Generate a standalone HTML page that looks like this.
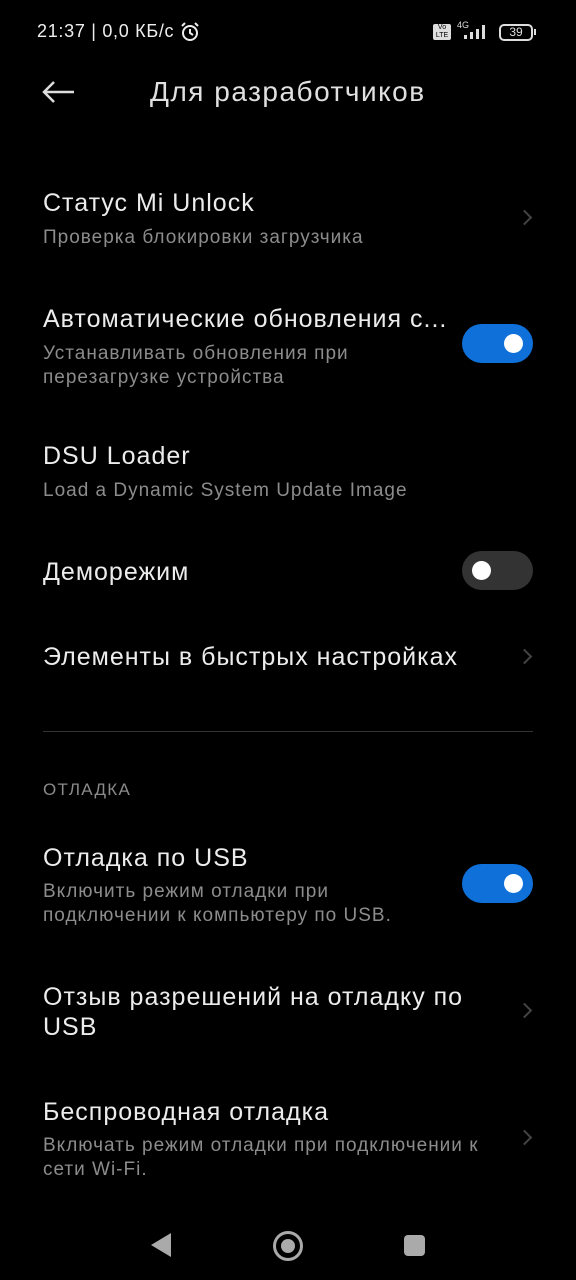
<!DOCTYPE html>
<html><head><meta charset="utf-8"><style>
body{margin:0;width:576px;height:1280px;background:#000;position:relative;overflow:hidden;font-family:"Liberation Sans",sans-serif}
.a{position:absolute;white-space:nowrap}
.t{font-size:25px;letter-spacing:1px;color:#ececec;left:43px}
.s{font-size:19px;letter-spacing:1px;color:#8c8c8c;left:43px;line-height:24px}
.sw{position:absolute;left:462px;width:71px;height:39px;border-radius:20px}
.on{background:#0f70d9}.off{background:#333}
.k{position:absolute;top:10px;width:19px;height:19px;border-radius:50%;background:#fff}
.ch{position:absolute;left:519px;width:9px;height:9px;border-top:2px solid #444;border-right:2px solid #444;transform:rotate(45deg)}
</style></head><body>
<div class="a" style="left:37px;top:21px;font-size:18px;letter-spacing:0.7px;color:#eee">21:37 | 0,0 КБ/с</div>
<svg class="a" style="left:179px;top:21px" width="22" height="22" viewBox="0 0 22 22"><circle cx="11" cy="12" r="7" fill="none" stroke="#eee" stroke-width="2"/><path d="M11 8v4l3 2M3 5l3-3M19 5l-3-3" stroke="#eee" stroke-width="2" fill="none"/></svg>
<div class="a" style="left:433px;top:24px;width:18px;height:16px;background:#ddd;border-radius:2px;font-size:7px;color:#000;text-align:center;line-height:8px">Vo<br>LTE</div>
<div class="a" style="left:457px;top:20px;font-size:9px;color:#ddd">4G</div>
<svg class="a" style="left:458px;top:24px" width="34" height="16"><rect x="6" y="11" width="3" height="4" fill="#ddd"/><rect x="12" y="8" width="3" height="7" fill="#ddd"/><rect x="18" y="5" width="3" height="10" fill="#ddd"/><rect x="24" y="1" width="3" height="14" fill="#ddd"/></svg>
<div class="a" style="left:499px;top:24px;width:30px;height:13px;border:2px solid #ddd;border-radius:5px;font-size:12px;color:#ddd;text-align:center;line-height:13px">39</div>
<div class="a" style="left:534px;top:29px;width:2px;height:6px;background:#ddd"></div>
<svg class="a" style="left:40px;top:80px" width="36" height="24"><path d="M34 12H4M14 2L4 12l10 10" stroke="#ddd" stroke-width="2.5" fill="none"/></svg>
<div class="a" style="left:150px;top:76px;font-size:28px;letter-spacing:1.5px;color:#e0e0e0">Для разработчиков</div>

<div class="a t" style="top:189px">Статус Mi Unlock</div>
<div class="a s" style="top:226px">Проверка блокировки загрузчика</div>
<div class="ch" style="top:212px"></div>

<div class="a t" style="top:305px">Автоматические обновления с...</div>
<div class="a s" style="top:342px">Устанавливать обновления при<br>перезагрузке устройства</div>
<div class="sw on" style="top:324px"><div class="k" style="left:42px"></div></div>

<div class="a t" style="top:442px">DSU Loader</div>
<div class="a s" style="top:479px">Load a Dynamic System Update Image</div>

<div class="a t" style="top:558px">Деморежим</div>
<div class="sw off" style="top:551px"><div class="k" style="left:10px"></div></div>

<div class="a t" style="top:643px">Элементы в быстрых настройках</div>
<div class="ch" style="top:651px"></div>

<div class="a" style="left:43px;top:731px;width:490px;height:1px;background:#333"></div>
<div class="a" style="left:43px;top:780px;font-size:17px;letter-spacing:1.3px;color:#8a8a8a">ОТЛАДКА</div>

<div class="a t" style="top:844px">Отладка по USB</div>
<div class="a s" style="top:880px">Включить режим отладки при<br>подключении к компьютеру по USB.</div>
<div class="sw on" style="top:864px"><div class="k" style="left:42px"></div></div>

<div class="a t" style="top:982px;line-height:30px">Отзыв разрешений на отладку по<br>USB</div>
<div class="ch" style="top:1005px"></div>

<div class="a t" style="top:1098px">Беспроводная отладка</div>
<div class="a s" style="top:1134px">Включать режим отладки при подключении к<br>сети Wi-Fi.</div>
<div class="ch" style="top:1132px"></div>

<svg class="a" style="left:150px;top:1232px" width="22" height="26"><path d="M21 1L1 13l20 12z" fill="#aaa"/></svg>
<div class="a" style="left:273px;top:1231px;width:24px;height:24px;border:3px solid #aaa;border-radius:50%"></div>
<div class="a" style="left:281px;top:1239px;width:14px;height:14px;background:#aaa;border-radius:50%"></div>
<div class="a" style="left:404px;top:1235px;width:21px;height:21px;background:#aaa;border-radius:4px"></div>
</body></html>
